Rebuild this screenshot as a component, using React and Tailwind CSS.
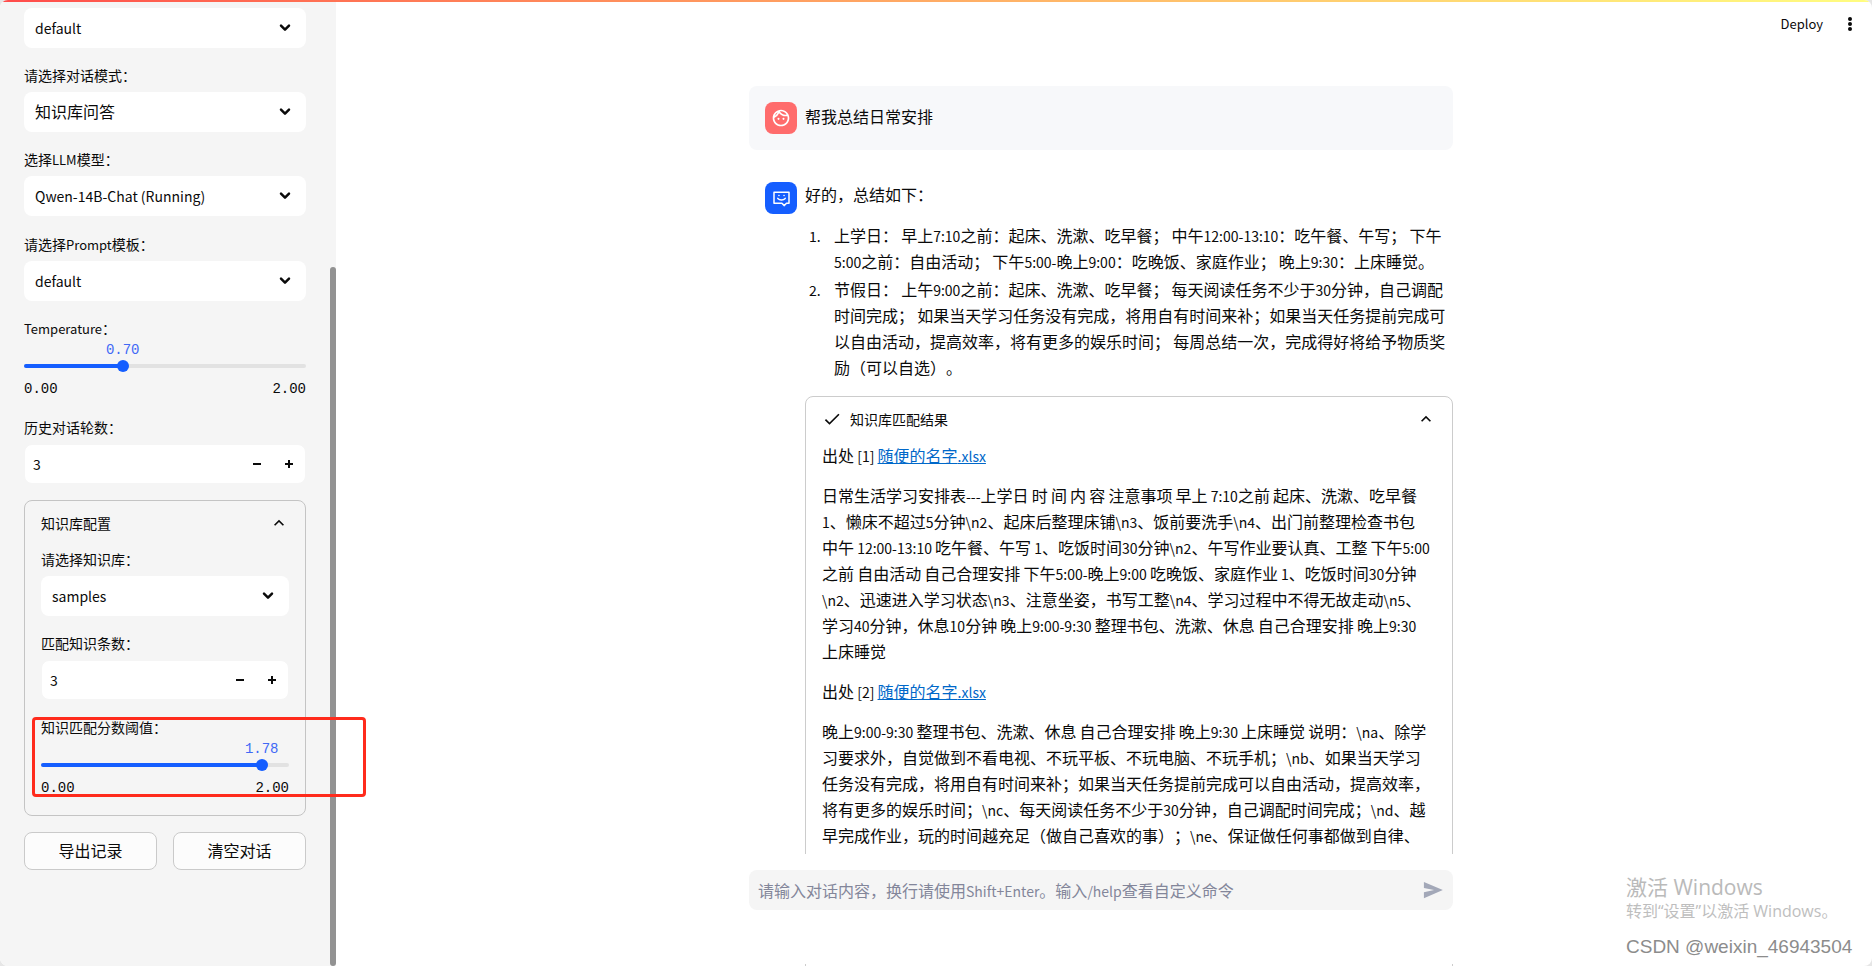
import { Children, useId } from 'react'

// Latin runs are set a step smaller than the Han text around them.
const LATIN = /([\x20-\x7e]+)/

function Mixed({ children, small }) {
  const text = Children.toArray(children).join('')
  return text.split(LATIN).map((part, i) =>
    i % 2 ? (
      <span key={i} className={small ? 'text-[13px] leading-none' : 'text-[14px] leading-none'}>{part}</span>
    ) : (
      part
    ),
  )
}

function ChevronDown() {
  return (
    <svg width="20" height="20" viewBox="0 0 24 24" fill="none" stroke="currentColor" strokeWidth="3" strokeLinejoin="round" strokeLinecap="round" aria-hidden="true">
      <path d="M7.2 9.2 12 14l4.8-4.8" />
    </svg>
  )
}

function ChevronUp() {
  return (
    <svg width="20" height="20" viewBox="0 0 24 24" fill="currentColor" aria-hidden="true">
      <path d="m12 8-6 6 1.41 1.41L12 10.83l4.59 4.58L18 14z" />
    </svg>
  )
}

function Label({ htmlFor, children }) {
  return (
    <label htmlFor={htmlFor} className="flex h-[22px] items-center text-[14px]">
      <span><Mixed small>{children}</Mixed></span>
    </label>
  )
}

function SelectField({ label, value, han }) {
  const id = useId()
  return (
    <div className="flex flex-col gap-1.5">
      {label && <Label htmlFor={id}>{label}</Label>}
      <div className="relative">
        <select
          id={id}
          aria-label={label ? undefined : value}
          className={`h-10 w-full appearance-none rounded-lg bg-white pr-9 pl-[11px] ${han ? 'pb-0.5 text-[16px]' : 'text-[14px]'}`}
        >
          <option>{value}</option>
        </select>
        <span className="pointer-events-none absolute inset-y-0 right-[11px] flex items-center">
          <ChevronDown />
        </span>
      </div>
    </div>
  )
}

function NumberField({ label, value }) {
  const id = useId()
  return (
    <div className="flex flex-col gap-1.5">
      <Label htmlFor={id}>{label}</Label>
      <div className="flex h-10 items-center rounded-lg border border-[#f5f5f5] bg-white">
        <input id={id} defaultValue={value} className="min-w-0 flex-1 bg-transparent pl-2 text-[14px] outline-none" />
        <button aria-label="-" className="flex h-full w-8 items-center justify-center">
          <svg width="8" height="8" viewBox="0 0 8 8" fill="currentColor"><path d="M0 3v2h8V3z" /></svg>
        </button>
        <button aria-label="+" className="flex h-full w-8 items-center justify-center">
          <svg width="8" height="8" viewBox="0 0 8 8" fill="currentColor"><path d="M3 0v3H0v2h3v3h2V5h3V3H5V0z" /></svg>
        </button>
      </div>
    </div>
  )
}

function SliderField({ label, value, max = 2 }) {
  const id = useId()
  const percent = `${(value / max) * 100}%`
  return (
    <div className="flex flex-col">
      <Label htmlFor={id}>{label}</Label>
      <div className="relative mt-[25px] h-1 rounded-full bg-[#e2e2e2]">
        <div className="h-1 rounded-full bg-[#155eff]" style={{ width: percent }} />
        <div className="absolute -top-1 size-3 -translate-x-1/2 rounded-full bg-[#155eff]" style={{ left: percent }} />
        <output htmlFor={id} className="absolute bottom-2 -translate-x-1/2 font-['Liberation_Mono',monospace] text-[14px] leading-5 text-[#4169f5]" style={{ left: percent }}>
          {value.toFixed(2)}
        </output>
        <input id={id} type="range" min="0" max={max} step="0.01" defaultValue={value} className="absolute inset-x-0 -top-1 h-3 w-full cursor-pointer opacity-0" />
      </div>
      <div className="flex h-8 items-end justify-between pb-px font-['Liberation_Mono',monospace] text-[14px] leading-5">
        <span>0.00</span>
        <span>{max.toFixed(2)}</span>
      </div>
    </div>
  )
}

function Sidebar() {
  return (
    <aside className="relative flex w-[336px] shrink-0 flex-col gap-4 bg-[#f5f5f5] pt-2 pr-[30px] pl-6">
      <SelectField value="default" />
      <SelectField label="请选择对话模式：" value="知识库问答" han />
      <SelectField label="选择LLM模型：" value="Qwen-14B-Chat (Running)" />
      <div className="flex flex-col gap-4 pt-px">
        <SelectField label="请选择Prompt模板：" value="default" />
        <SliderField label="Temperature：" value={0.7} />
        <NumberField label="历史对话轮数：" value="3" />
      </div>

      <section className="relative flex flex-col rounded-lg border border-[#c4c4c4] px-4 pb-4">
        <button className="flex h-[47px] items-center justify-between pb-[3px] text-[14px]">
          知识库配置
          <ChevronUp />
        </button>
        <div className="flex flex-col gap-4">
          <SelectField label="请选择知识库：" value="samples" />
          <NumberField label="匹配知识条数：" value="3" />
          <SliderField label="知识匹配分数阈值：" value={1.78} />
        </div>
        {/* marker around the score threshold */}
        <div className="pointer-events-none absolute -right-[61px] bottom-[18px] left-[7px] z-10 h-20 rounded-sm border-[3px] border-[#ff2b1c]" />
      </section>

      <div className="grid grid-cols-2 gap-4">
        <button className="h-[38px] rounded-lg border border-[#cacaca] bg-[#fcfcfc] pb-0.5 text-[16px]">导出记录</button>
        <button className="h-[38px] rounded-lg border border-[#cacaca] bg-[#fcfcfc] pb-0.5 text-[16px]">清空对话</button>
      </div>

      <div className="absolute top-[267px] right-0 bottom-0 w-1.5 rounded-full bg-[#929292]" />
    </aside>
  )
}

function UserAvatar() {
  return (
    <span className="flex size-8 shrink-0 items-center justify-center rounded-lg bg-[#ff6c6c] text-white">
      <svg width="20" height="20" viewBox="0 0 24 24" fill="currentColor" aria-hidden="true">
        <path d="M10.25 13a1.25 1.25 0 1 1-2.5 0 1.25 1.25 0 0 1 2.5 0M15 11.75a1.25 1.25 0 1 0 0 2.5 1.25 1.25 0 0 0 0-2.5m7 .25c0 5.52-4.48 10-10 10S2 17.52 2 12 6.48 2 12 2s10 4.48 10 10M10.66 4.12C12.06 6.44 14.6 8 17.5 8c.46 0 .91-.05 1.34-.12C17.44 5.56 14.9 4 12 4c-.46 0-.91.05-1.34.12M4.42 9.47a8.05 8.05 0 0 0 3.66-4.44 8.04 8.04 0 0 0-3.66 4.44M20 12c0-.78-.12-1.53-.33-2.24-.7.15-1.42.24-2.17.24a10 10 0 0 1-7.76-3.69A10.02 10.02 0 0 1 4 11.86c.01.04 0 .09 0 .14 0 4.41 3.59 8 8 8s8-3.59 8-8" />
      </svg>
    </span>
  )
}

function BotAvatar() {
  return (
    <span className="flex size-8 shrink-0 items-center justify-center rounded-lg bg-[#155eff] text-white">
      <svg width="20" height="20" viewBox="0 0 20 20" fill="none" stroke="currentColor" strokeWidth="1.5" strokeLinecap="round" strokeLinejoin="round" aria-hidden="true">
        <path d="M3 4.2h15v11h-2.5l-2.2 2.4-2.4-2.4H3z" />
        <path d="M6.8 10.4c1.8 2 5.6 2 7.4 0M7.9 7.6h.1M13 7.6h.1" />
      </svg>
    </span>
  )
}

const SOURCES = [
  {
    file: '随便的名字.xlsx',
    text: '日常生活学习安排表---上学日 时 间 内 容 注意事项 早上 7:10之前 起床、洗漱、吃早餐 1、懒床不超过5分钟\\n2、起床后整理床铺\\n3、饭前要洗手\\n4、出门前整理检查书包 中午 12:00-13:10 吃午餐、午写 1、吃饭时间30分钟\\n2、午写作业要认真、工整 下午5:00之前 自由活动 自己合理安排 下午5:00-晚上9:00 吃晚饭、家庭作业 1、吃饭时间30分钟\\n2、迅速进入学习状态\\n3、注意坐姿，书写工整\\n4、学习过程中不得无故走动\\n5、学习40分钟，休息10分钟 晚上9:00-9:30 整理书包、洗漱、休息 自己合理安排 晚上9:30 上床睡觉',
  },
  {
    file: '随便的名字.xlsx',
    text: '晚上9:00-9:30 整理书包、洗漱、休息 自己合理安排 晚上9:30 上床睡觉 说明：\\na、除学习要求外，自觉做到不看电视、不玩平板、不玩电脑、不玩手机；\\nb、如果当天学习任务没有完成，将用自有时间来补；如果当天任务提前完成可以自由活动，提高效率，将有更多的娱乐时间；\\nc、每天阅读任务不少于30分钟，自己调配时间完成；\\nd、越早完成作业，玩的时间越充足（做自己喜欢的事）；\\ne、保证做任何事都做到自律、',
  },
]

function Sources() {
  return (
    <section className="flex flex-col rounded-lg border border-[#cccccc] px-4 pb-4">
      <button className="flex h-[45px] items-center pb-0.5 text-[14px]">
        <svg width="20" height="20" viewBox="0 0 24 24" fill="currentColor" aria-hidden="true">
          <path d="M9 16.17 4.83 12l-1.42 1.41L9 19 21 7l-1.41-1.41z" />
        </svg>
        <span className="ml-2 flex-1 text-left">知识库匹配结果</span>
        <ChevronUp />
      </button>
      <div className="flex flex-col gap-3.5 pr-1">
        {SOURCES.map((source, i) => (
          <div key={i} className="flex flex-col gap-3.5">
            <p>
              <Mixed>{`出处 [${i + 1}] `}</Mixed>
              <a href="#" className="text-[#0068c9] underline"><Mixed>{source.file}</Mixed></a>
            </p>
            <p><Mixed>{source.text}</Mixed></p>
          </div>
        ))}
      </div>
    </section>
  )
}

function Chat() {
  return (
    <div className="min-h-0 flex-1 overflow-hidden pt-[38px]">
      <div className="mx-auto flex w-[704px] max-w-full flex-col gap-4 text-[16px] leading-[26px]">
        <div className="flex gap-2 rounded-lg bg-[#f7f8fa] p-4">
          <UserAvatar />
          <p className="pt-0.5 leading-6">帮我总结日常安排</p>
        </div>
        <div className="flex gap-2 py-4 pl-4">
          <BotAvatar />
          <div className="min-w-0 flex-1">
            <p className="leading-6">好的，总结如下：</p>
            <ol className="mt-4 mb-4 flex flex-col gap-0.5 pr-1">
              <li className="flex">
                <span className="w-[29px] shrink-0 pl-1"><Mixed>1.</Mixed></span>
                <span><Mixed>上学日： 早上7:10之前：起床、洗漱、吃早餐； 中午12:00-13:10：吃午餐、午写； 下午5:00之前：自由活动； 下午5:00-晚上9:00：吃晚饭、家庭作业； 晚上9:30：上床睡觉。</Mixed></span>
              </li>
              <li className="flex">
                <span className="w-[29px] shrink-0 pl-1"><Mixed>2.</Mixed></span>
                <span><Mixed>节假日： 上午9:00之前：起床、洗漱、吃早餐； 每天阅读任务不少于30分钟，自己调配时间完成； 如果当天学习任务没有完成，将用自有时间来补；如果当天任务提前完成可以自由活动，提高效率，将有更多的娱乐时间； 每周总结一次，完成得好将给予物质奖励（可以自选）。</Mixed></span>
              </li>
            </ol>
            <Sources />
          </div>
        </div>
      </div>
    </div>
  )
}

function Composer() {
  const id = useId()
  return (
    <footer className="mx-auto w-[704px] max-w-full shrink-0 pt-4">
      <div className="relative flex h-10 items-center rounded-lg bg-[#f5f5f5] pr-2.5 pl-[9px]">
        <textarea
          id={id}
          rows="1"
          placeholder=" "
          className="peer h-6 min-w-0 flex-1 resize-none overflow-hidden bg-transparent text-[16px] leading-6 outline-none"
        />
        <label
          htmlFor={id}
          className="pointer-events-none invisible absolute left-[9px] text-[16px] leading-6 text-[#83869a] peer-placeholder-shown:visible"
        >
          <Mixed>请输入对话内容，换行请使用Shift+Enter。输入/help查看自定义命令</Mixed>
        </label>
        <button aria-label="发送" className="text-[#a3a8b8]">
          <svg width="20" height="20" viewBox="0 0 24 24" fill="currentColor">
            <path d="M1.1 21.76 23.8 12.03 1.1 2.3v7.2l12.2 2.53L1.1 14.56z" />
          </svg>
        </button>
      </div>
      {/* sources card continues below the composer */}
      <div className="mt-[54px] ml-14 h-0.5 border-x border-[#cccccc]" />
    </footer>
  )
}

export default function App() {
  return (
    <div className="h-screen bg-[#e6e6e6] font-['Noto_Sans_CJK_SC',sans-serif] text-[#0a0a0a] [text-spacing-trim:space-all]">
      <div className="relative flex h-full overflow-hidden rounded-lg bg-white">
        <div className="absolute inset-x-0 top-0 z-10 h-0.5 bg-linear-to-r from-[#ff4b4b] to-[#fffd80]" />
        <Sidebar />
        <main className="flex min-w-0 flex-1 flex-col pr-1.5">
          <header className="flex h-12 shrink-0 items-center justify-end gap-[18px] pr-[7px]">
            <button className="text-[13px]">Deploy</button>
            <button aria-label="菜单">
              <svg width="18" height="18" viewBox="0 0 18 18" fill="currentColor">
                <circle cx="9" cy="4" r="2" />
                <circle cx="9" cy="9" r="2" />
                <circle cx="9" cy="14" r="2" />
              </svg>
            </button>
          </header>
          <Chat />
          <Composer />
        </main>

        <div className="pointer-events-none absolute right-4 bottom-[7px] flex w-[230px] flex-col whitespace-nowrap">
          <p className="font-['Open_Sans','Noto_Sans_CJK_SC',sans-serif] text-[21px] leading-6 text-[#bababa]">激活 Windows</p>
          <p className="font-['Open_Sans','Noto_Sans_CJK_SC',sans-serif] text-[16px] leading-6 text-[#bebebe]">转到“设置”以激活 Windows。</p>
          <p className="mt-3 font-['Liberation_Sans',sans-serif] text-[19px] leading-6 text-[#8c8c8c]">CSDN @weixin_46943504</p>
        </div>
      </div>
    </div>
  )
}
